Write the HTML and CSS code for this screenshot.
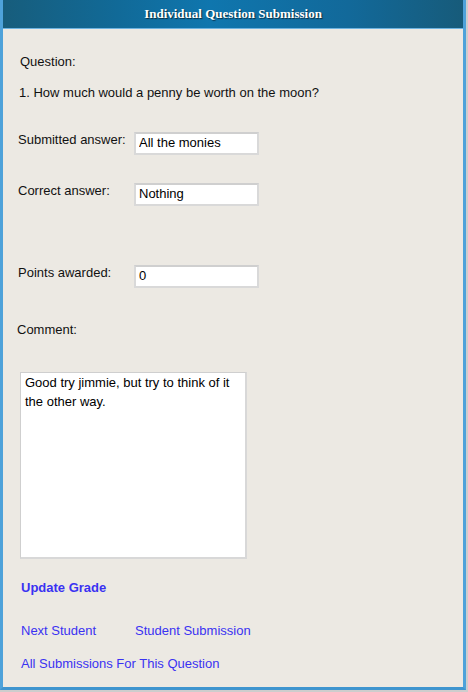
FILE: index.html
```html
<!DOCTYPE html>
<html>
<head>
<meta charset="utf-8">
<link rel="stylesheet" href="styles.css">
</head>
<body>
<div class="panel">
  <div class="header">Individual Question Submission</div>
  <div class="content">
    <p class="q-label">Question:</p>
    <p class="q-text">1. How much would a penny be worth on the moon?</p>
    <div class="row row-submitted">
      <span class="label">Submitted answer:</span>
      <input class="field" type="text" value="All the monies">
    </div>
    <div class="row row-correct">
      <span class="label">Correct answer:</span>
      <input class="field" type="text" value="Nothing">
    </div>
    <div class="row row-points">
      <span class="label">Points awarded:</span>
      <input class="field" type="text" value="0">
    </div>
    <p class="comment-label">Comment:</p>
    <textarea class="comment-box">Good try jimmie, but try to think of it the other way.</textarea>
    <a class="link update" href="#">Update Grade</a>
    <div class="nav-row">
      <a class="link next" href="#">Next Student</a>
      <a class="link" href="#">Student Submission</a>
    </div>
    <a class="link all" href="#">All Submissions For This Question</a>
  </div>
</div>
</body>
</html>
```
FILE: styles.css
```css
html, body {
  margin: 0;
  padding: 0;
}
body {
  background: #cdcdcd;
  width: 468px;
  height: 692px;
  font-family: "Liberation Sans", Arial, sans-serif;
  font-size: 13px;
  color: #111;
}
.panel {
  width: 460px;
  height: 687px;
  background: #ece9e3;
  border-left: 3px solid #4ea2da;
  border-right: 3px solid #4ea2da;
  border-bottom: 3px solid #3f95cf;
}
.header {
  height: 28px;
  border-bottom: 1px solid #6eb3e0;
  background: linear-gradient(to right, #175d7c 0%, #116a98 25%, #0f76ae 45%, #12699a 75%, #175b7a 100%);
  color: #fff;
  font-family: "Liberation Serif", "Times New Roman", serif;
  font-weight: bold;
  font-size: 13px;
  line-height: 27px;
  text-align: center;
  text-shadow: 1px 1px 1px rgba(0, 0, 0, 0.6);
}
.content {
  padding-left: 14px;
  line-height: 16px;
}
p {
  margin: 0;
}
.q-label {
  margin-top: 25px;
  margin-left: 3px;
}
.q-text {
  margin-top: 15px;
  margin-left: 2px;
}
.row {
  display: flex;
  align-items: flex-start;
}
.row-submitted { margin-top: 30px; }
.row-correct { margin-top: 27px; }
.row-points { margin-top: 58px; }
.label {
  width: 116px;
  margin-left: 1px;
  margin-top: 1px;
}
.field {
  box-sizing: border-box;
  margin: 1px 0 0 0;
  width: 125px;
  height: 23px;
  padding: 0 3px 2px 3px;
  border: 2px solid #d9d9d9;
  border-top-color: #cfcfcf;
  background: #fff;
  font-family: "Liberation Sans", Arial, sans-serif;
  font-size: 13px;
  color: #000;
  outline: none;
}
.comment-label {
  margin-top: 34px;
}
.comment-box {
  display: block;
  box-sizing: border-box;
  margin: 34px 0 0 3px;
  width: 227px;
  height: 187px;
  padding: 0 4px;
  border: 1px solid #cfcfcf;
  border-right-width: 2px;
  border-bottom-width: 2px;
  border-right-color: #d8d8d8;
  border-bottom-color: #d8d8d8;
  background: #fff;
  font-family: "Liberation Sans", Arial, sans-serif;
  font-size: 13px;
  line-height: 19px;
  color: #000;
  resize: none;
  overflow: hidden;
  outline: none;
}
.link {
  color: #3a32f2;
  text-decoration: none;
}
.update {
  display: block;
  margin: 21px 0 0 4px;
  font-weight: bold;
}
.nav-row {
  display: flex;
  margin: 27px 0 0 4px;
}
.next {
  width: 114px;
}
.all {
  display: block;
  margin: 17px 0 0 4px;
}
```
